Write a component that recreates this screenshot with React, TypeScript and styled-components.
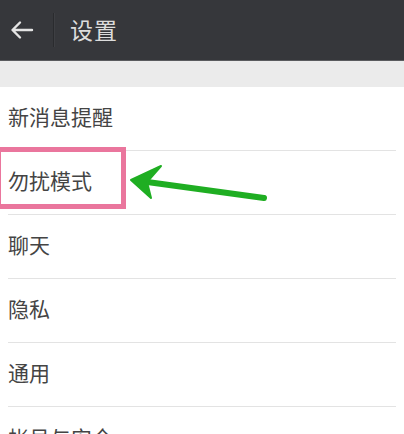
import React from 'react';
import styled, { createGlobalStyle } from 'styled-components';

const GlobalStyle = createGlobalStyle`
  html, body {
    margin: 0;
    padding: 0;
    background: #ffffff;
    overflow: hidden;
  }
  body {
    font-family: "Noto Sans CJK SC", "Noto Sans", sans-serif;
  }
`;

const StyledPage = styled.div`
  width: 404px;
  height: 434px;
  overflow: hidden;
  background: #ffffff;
`;

const StyledHeader = styled.header`
  height: 60px;
  display: flex;
  align-items: center;
  background: #36373b;
  border-bottom: 1px solid #5a5b5e;
`;

const StyledBack = styled.button`
  width: 53px;
  height: 100%;
  display: flex;
  align-items: center;
  justify-content: flex-start;
  padding: 0 0 0 10px;
  border: none;
  background: transparent;
`;

const StyledDivider = styled.div`
  width: 1px;
  height: 34px;
  background: #2a2b2e;
  box-shadow: 1px 0 0 #3e3f43;
`;

const StyledTitle = styled.h1`
  margin: 0 0 3px 16px;
  font-size: 23px;
  font-weight: 400;
  color: #dcdcdc;
  letter-spacing: 1px;
`;

const StyledGap = styled.div`
  height: 26px;
  background: #ebebeb;
`;

const StyledList = styled.ul`
  margin: 0;
  padding: 0 8px;
  list-style: none;
`;

const StyledRow = styled.li<{ $last?: boolean }>`
  position: relative;
  height: 64px;
  display: flex;
  align-items: center;
  padding-bottom: 5px;
  font-size: 21px;
  color: #444444;
  border-bottom: ${(props) => (props.$last ? 'none' : '1px solid #e3e3e3')};
  box-sizing: border-box;
`;

const StyledHighlight = styled.div`
  position: absolute;
  top: -4px;
  left: -12px;
  width: 130px;
  height: 62px;
  border: 5px solid #ea769d;
  box-sizing: border-box;
`;

const StyledArrow = styled.svg`
  position: absolute;
  top: 0;
  left: -8px;
  width: 300px;
  height: 64px;
  overflow: visible;
`;

const items = ['新消息提醒', '勿扰模式', '聊天', '隐私', '通用', '帐号与安全'];

export default function App() {
  return (
    <React.Fragment>
      <GlobalStyle />
      <StyledPage>
        <StyledHeader>
          <StyledBack aria-label="返回">
            <svg width="24" height="20" viewBox="0 0 24 20">
              <path
                d="M22 10H3M10 2.5L2.5 10l7.5 7.5"
                fill="none"
                stroke="#e4e4e4"
                strokeWidth="2.4"
                strokeLinecap="round"
                strokeLinejoin="round"
              />
            </svg>
          </StyledBack>
          <StyledDivider />
          <StyledTitle>设置</StyledTitle>
        </StyledHeader>
        <StyledGap />
        <StyledList>
          {items.map((item, i) => (
            <StyledRow key={item} $last={i === items.length - 1}>
              {item}
              {i === 1 && (
                <React.Fragment>
                  <StyledHighlight />
                  <StyledArrow viewBox="0 0 300 64">
                    <path
                      d="M140 30L264 47"
                      fill="none"
                      stroke="#1fae22"
                      strokeWidth="6"
                      strokeLinecap="round"
                    />
                    <path
                      d="M131 29L161 15L147 31L151 47Z"
                      fill="#1fae22"
                      stroke="#1fae22"
                      strokeWidth="2"
                      strokeLinejoin="round"
                    />
                  </StyledArrow>
                </React.Fragment>
              )}
            </StyledRow>
          ))}
        </StyledList>
      </StyledPage>
    </React.Fragment>
  );
}
